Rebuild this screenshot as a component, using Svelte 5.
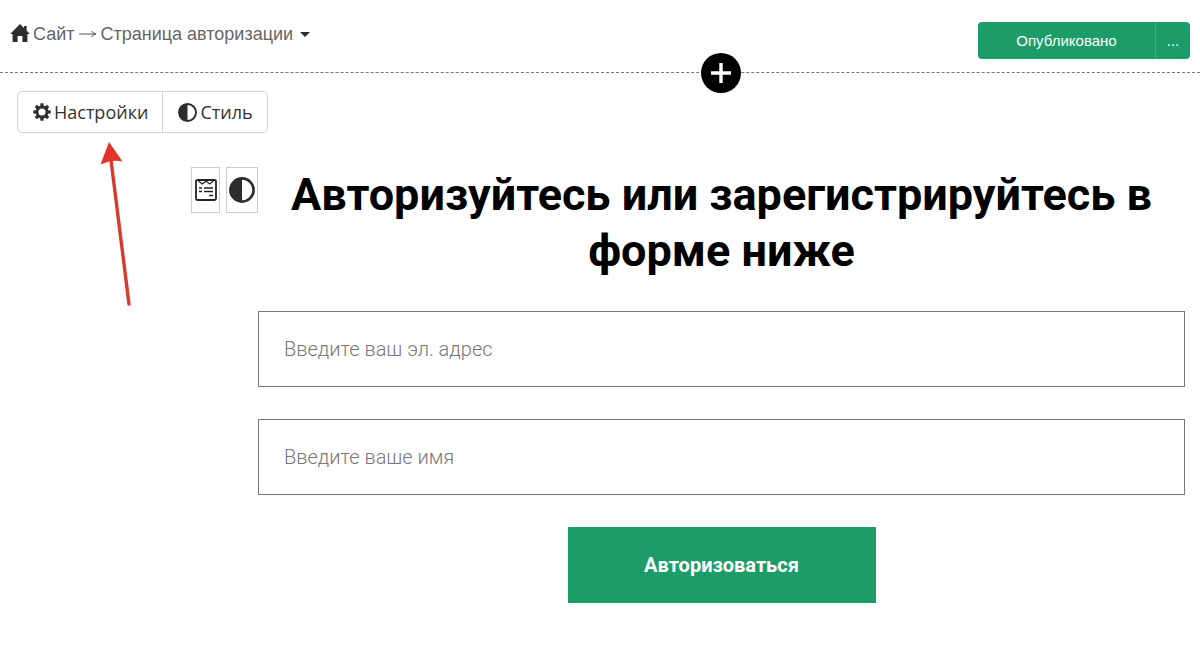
<script lang="ts">
  interface Field {
    id: string;
    type: 'email' | 'text';
    placeholder: string;
  }

  const fields: Field[] = [
    { id: 'email', type: 'email', placeholder: 'Введите ваш эл. адрес' },
    { id: 'name', type: 'text', placeholder: 'Введите ваше имя' },
  ];

  let values = $state<Record<string, string>>({ email: '', name: '' });

  // Teeth of the settings gear, in degrees
  const teeth = [0, 45, 90, 135, 180, 225, 270, 315];
</script>

{#snippet contrast(size: number)}
  <svg width={size} height={size} viewBox="0 0 24 24" aria-hidden="true">
    <circle cx="12" cy="12" r="10.7" fill="#fff" stroke="#2d2d2d" stroke-width="2.4" />
    <path d="M12 1a11 11 0 0 0 0 22z" fill="#2d2d2d" />
  </svg>
{/snippet}

<header class="topbar">
  <nav class="crumbs" aria-label="Навигация">
    <a class="home" href="#site">
      <svg width="20" height="20" viewBox="0 0 20 20" aria-hidden="true">
        <path
          d="M10 0l4 4V2h2.600v4.600L19.800 10h-2.400v8h-5v-6H7.600v6h-5v-8H.2z"
          fill="#2d2d2d"
        />
      </svg>
      Сайт
    </a>
    <svg class="sep" width="18" height="10" viewBox="0 0 18 10" aria-label="→">
      <path d="M0 5h16M12.500 2Q14 4.500 17 5Q14 5.500 12.500 8" fill="none" stroke="#555" />
    </svg>
    <button class="page" type="button">
      Страница авторизации
      <svg width="10" height="5" viewBox="0 0 10 5" aria-hidden="true">
        <path d="M0 0h10L5 5z" fill="#2d2d2d" />
      </svg>
    </button>
  </nav>
  <div class="publish">
    <button class="state" type="button">Опубликовано</button>
    <button class="more" type="button" aria-label="Ещё">...</button>
  </div>
  <button class="add" type="button" aria-label="Добавить блок">
    <svg width="22" height="22" viewBox="0 0 22 22" aria-hidden="true">
      <path d="M11 1v20M1 11h20" stroke="#fff" stroke-width="3.400" />
    </svg>
  </button>
</header>

<main>
  <div class="toolbar">
    <button type="button">
      <svg width="18" height="18" viewBox="0 0 18 18" aria-hidden="true">
        {#each teeth as deg (deg)}
          <path d="M7.200 3.500L7.500 .3h3l.3 3.200z" fill="#2d2d2d" transform="rotate({deg} 9 9)" />
        {/each}
        <circle cx="9" cy="9" r="5" fill="none" stroke="#2d2d2d" stroke-width="2.800" />
      </svg>
      Настройки
    </button>
    <button type="button">
      {@render contrast(19)}
      Стиль
    </button>
    <svg class="pointer" width="32" height="166" viewBox="0 0 32 166" aria-hidden="true">
      <path d="M11 18L29 162" stroke="#d93a30" stroke-width="3.400" stroke-linecap="round" />
      <path d="M9 0L22.500 19.500Q12 17 .5 22.500z" fill="#e0352b" />
    </svg>
  </div>

  <div class="block">
    <div class="tools">
      <button class="tool narrow" type="button" aria-label="Настройки блока">
        <svg width="22" height="22" viewBox="0 0 22 22" fill="none" stroke="#222" aria-hidden="true">
          <rect x="1" y="1" width="20" height="20" rx="1.500" stroke-width="1.800" />
          <path d="M3.500 2l3.800 3L11 2l3.700 3L18.500 2" stroke-width="1.300" />
          <path d="M4 9h3M9 9h9M4 12.500h3M9 12.500h9M14 16.500h4" stroke-width="1.600" />
        </svg>
      </button>
      <button class="tool" type="button" aria-label="Стиль блока">
        {@render contrast(26)}
      </button>
    </div>

    <form onsubmit={(e) => e.preventDefault()}>
      <h1>Авторизуйтесь или зарегистрируйтесь в форме ниже</h1>
      {#each fields as field (field.id)}
        <input
          id={field.id}
          type={field.type}
          placeholder={field.placeholder}
          aria-label={field.placeholder}
          bind:value={values[field.id]}
        />
      {/each}
      <button class="submit" type="submit">Авторизоваться</button>
    </form>
  </div>
</main>

<style>
  :global(body) {
    margin: 0;
    background: #fff;
  }

  button {
    margin: 0;
    padding: 0;
    border: none;
    background: none;
    font-family: inherit;
    cursor: pointer;
  }

  svg {
    display: block;
    flex: none;
  }

  .topbar {
    position: relative;
    display: flex;
    justify-content: space-between;
    align-items: center;
    box-sizing: border-box;
    min-height: 73px;
    padding: 8px 10px 0;
    border-bottom: 1px dashed #777;
    font-family: 'Liberation Sans', Arial, sans-serif;
  }

  .crumbs {
    display: flex;
    align-items: center;
    gap: 4px;
    padding-bottom: 12px;
    font-size: 18px;
    line-height: 24px;
  }

  .home,
  .page {
    display: flex;
    align-items: center;
    gap: 3px;
    color: #666;
    font-size: 18px;
    line-height: 24px;
    text-decoration: none;
  }

  .page {
    gap: 7px;
  }

  .publish {
    display: flex;
    border-radius: 4px;
    overflow: hidden;
  }

  .publish button {
    height: 37px;
    background: #1b9c68;
    color: #fff;
    font-size: 15px;
  }

  .publish .state {
    width: 177px;
  }

  .publish .more {
    width: 35px;
    border-left: 1px solid #3fae6e;
  }

  /* Sits on the dashed line, centred over the form column */
  .add {
    position: absolute;
    left: calc(50% + 121px);
    bottom: -21px;
    display: grid;
    place-items: center;
    width: 40px;
    height: 40px;
    border-radius: 50%;
    background: #000;
    transform: translateX(-50%);
  }

  .toolbar {
    position: relative;
    display: inline-flex;
    margin: 18px 0 0 17px;
    border: 1px solid #d4d4d4;
    border-radius: 5px;
    vertical-align: top;
  }

  .toolbar button {
    display: flex;
    align-items: center;
    gap: 3px;
    height: 40px;
    padding: 0 14px 0 15px;
    color: #333;
    font-family: 'Open Sans', sans-serif;
    font-size: 18px;
  }

  .toolbar button + button {
    border-left: 1px solid #d4d4d4;
  }

  .pointer {
    position: absolute;
    top: 50px;
    left: 82px;
    pointer-events: none;
  }

  .block {
    display: grid;
    grid-template-columns: 258px minmax(0, 1fr);
    padding: 34px 15px 40px 0;
    font-family: Roboto, sans-serif;
  }

  .tools {
    display: flex;
    justify-content: flex-end;
    align-items: flex-start;
    gap: 6px;
  }

  .tool {
    display: grid;
    place-items: center;
    box-sizing: border-box;
    width: 32px;
    height: 46px;
    border: 1px solid #ccc;
  }

  .tool.narrow {
    width: 29px;
  }

  form {
    display: flex;
    flex-direction: column;
    gap: 32px;
  }

  h1 {
    margin: 0;
    color: #000;
    font-size: 45px;
    font-weight: 700;
    line-height: 56px;
    text-align: center;
  }

  input {
    box-sizing: border-box;
    width: 100%;
    height: 76px;
    padding: 0 25px;
    border: 1px solid #777;
    border-radius: 0;
    background: #fff;
    color: #222;
    font-family: inherit;
    font-size: 20px;
    font-weight: 300;
  }

  input::placeholder {
    color: #777;
    opacity: 1;
  }

  .submit {
    align-self: center;
    width: 308px;
    height: 76px;
    background: #1b9c68;
    color: #fff;
    font-size: 20px;
    font-weight: 700;
  }
</style>
